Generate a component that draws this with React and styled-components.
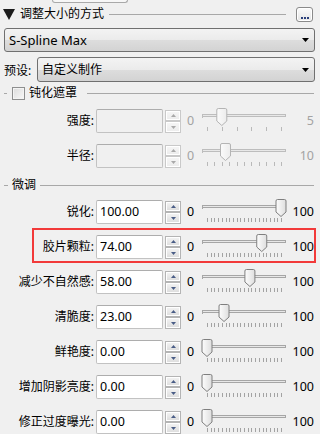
import React from "react";
import styled, { createGlobalStyle, css } from "styled-components";

const Global = createGlobalStyle`
  html, body { margin: 0; padding: 0; background: #f0f0f0; }
  body { font-family: "Noto Sans", "Noto Sans CJK SC", sans-serif; color: #000; }
  * { box-sizing: border-box; }
`;

const CJK = `"Noto Sans", "Noto Sans CJK SC", sans-serif`;

const Panel = styled.div`
  width: 320px;
  height: 434px;
  overflow: hidden;
  background: #f0f0f0;
  display: flex;
  flex-direction: column;
`;

const TopStub = styled.div`
  margin-left: 52px;
  width: 76px;
  height: 3px;
  flex: none;
  border: 1px solid #a9a9a9;
  border-top: none;
  border-radius: 0 0 3px 3px;
  background: #f7f7f7;
`;

const HeaderRow = styled.div`
  height: 22px;
  flex: none;
  display: flex;
  align-items: center;
  padding: 0 7px 0 3px;
`;

const Title = styled.span`
  font-family: ${CJK};
  font-size: 12px;
  margin-left: 5px;
  line-height: 1;
`;

const Rule = styled.div`
  flex: 1;
  height: 1px;
  background: #a8a8a8;
  margin-left: ${(p) => p.$gap || 5}px;
  margin-right: ${(p) => p.$right || 0}px;
`;

const DotsButton = styled.div`
  width: 17px;
  height: 15px;
  border: 1px solid #8a8a8a;
  border-radius: 3px;
  background: linear-gradient(#fbfbfb, #e4e4e4);
  box-shadow: inset 0 0 0 1px #ffffff;
  display: flex;
  align-items: flex-end;
  justify-content: center;
  padding-bottom: 2px;
  gap: 1px;
`;

const Dot = styled.span`
  width: 2px;
  height: 2px;
  background: #2a3f7a;
`;

const Select = styled.div`
  height: ${(p) => p.$h || 24}px;
  flex: ${(p) => (p.$grow ? 1 : "none")};
  border: 1px solid #707070;
  border-radius: 3px;
  background: linear-gradient(#f3f3f3 0%, #ebebeb 50%, #dddddd 51%, #d3d3d3 100%);
  display: flex;
  align-items: center;
  padding: 0 5px 0 4px;
  font-family: ${CJK};
  font-size: ${(p) => p.$fs || 12}px;
`;

const SelectText = styled.span`
  flex: 1;
  line-height: 1;
`;

const FirstSelect = styled(Select)`
  margin: 3px 5px 0 4px;
`;

const PresetRow = styled.div`
  margin-top: 5px;
  display: flex;
  align-items: center;
  padding: 0 5px 0 4px;
  gap: 4px;
  flex: none;
`;

const PresetLabel = styled.span`
  font-family: ${CJK};
  font-size: 12px;
  width: 29px;
`;

const GroupHeader = styled.div`
  height: ${(p) => p.$h}px;
  margin-bottom: ${(p) => p.$mb}px;
  flex: none;
  display: flex;
  align-items: center;
  padding: 0 6px 0 4px;
`;

const Dash = styled.div`
  width: ${(p) => p.$w}px;
  height: 1px;
  background: #a8a8a8;
  margin-right: ${(p) => p.$mr}px;
`;

const CheckBox = styled.div`
  width: 13px;
  height: 13px;
  border: 1px solid #8e8f8f;
  background: linear-gradient(135deg, #dcdcdc, #f8f8f8);
  box-shadow: inset 0 0 0 1px #f4f4f4;
  margin-right: 4px;
`;

const GroupTitle = styled.span`
  font-family: ${CJK};
  font-size: 12px;
  line-height: 1;
`;

const ParamRowWrap = styled.div`
  height: 35px;
  flex: none;
  display: flex;
  align-items: flex-start;
  position: relative;
  ${(p) =>
    p.$highlight &&
    css`
      &::after {
        content: "";
        position: absolute;
        left: 32px;
        right: 4px;
        top: -6px;
        bottom: 6px;
        border: 2px solid #f23a3a;
        pointer-events: none;
      }
    `}
`;

const Label = styled.div`
  width: 96px;
  padding-right: 2px;
  margin-top: 1px;
  height: 24px;
  line-height: 24px;
  text-align: right;
  font-family: ${CJK};
  font-size: 12px;
  white-space: nowrap;
`;

const ValueBox = styled.div`
  width: 67px;
  height: 24px;
  margin-top: 1px;
  border: 1px solid #c2c2c2;
  border-top-color: #adadad;
  border-radius: 2px;
  background: ${(p) => (p.$disabled ? "#f0f0f0" : "#ffffff")};
  font-family: "Noto Sans", sans-serif;
  font-size: 12.5px;
  line-height: 22px;
  padding-left: 3px;
`;

const Spin = styled.div`
  margin: 2px 0 0 2px;
  width: 16px;
  display: flex;
  flex-direction: column;
  gap: 0px;
`;

const SpinButton = styled.div`
  height: ${(p) => p.$h}px;
  border: 1px solid ${(p) => (p.$disabled ? "#c9c9c9" : "#b4b4b4")};
  box-shadow: inset 0 0 0 1px #ffffff;
  background: ${(p) =>
    p.$disabled ? "linear-gradient(#f6f6f6, #ececec)" : "linear-gradient(#f4f4f4, #dcdcdc)"};
  display: flex;
  align-items: center;
  justify-content: center;
`;

const MinLabel = styled.div`
  width: 19px;
  padding-left: 6px;
  margin-top: 1px;
  line-height: 24px;
  font-family: "Noto Sans", sans-serif;
  font-size: 12.5px;
  color: ${(p) => (p.$disabled ? "#a3a3a3" : "#000")};
`;

const MaxLabel = styled.div`
  flex: 1;
  text-align: right;
  padding-right: 6px;
  margin-top: 1px;
  line-height: 24px;
  font-family: "Noto Sans", sans-serif;
  font-size: 12.5px;
  color: ${(p) => (p.$disabled ? "#a3a3a3" : "#000")};
`;

const SliderSvg = styled.svg`
  flex: none;
  display: block;
`;

function Arrow({ up, disabled }) {
  return (
    <svg width="5" height="3" viewBox="0 0 5 3">
      <polygon
        points={up ? "0,3 5,3 2.5,0" : "0,0 5,0 2.5,3"}
        fill={disabled ? "#a9a9a9" : "#4a5d86"}
      />
    </svg>
  );
}

function Slider({ value, max, ticks, disabled }) {
  const cx = 7 + (value / max) * 74;
  const tickXs = Array.from({ length: ticks }, (_, i) => Math.round(7 + (i * 74) / (ticks - 1)) + 0.5);
  const stroke = disabled ? "#b4b4b4" : "#7f7f7f";
  const id = `g${value}${max}${disabled ? "d" : "e"}`;
  return (
    <SliderSvg width="90" height="25" viewBox="0 0 90 25">
      <defs>
        <linearGradient id={id} x1="0" x2="1" y1="0" y2="0">
          <stop offset="0" stopColor={disabled ? "#fbfbfb" : "#fdfdfd"} />
          <stop offset="1" stopColor={disabled ? "#ececec" : "#dedede"} />
        </linearGradient>
      </defs>
      <rect x="2.5" y="6.5" width="83" height="2" fill="#e8e8e8" stroke={disabled ? "#bdbdbd" : "#a6a6a6"} />
      <line x1="2.5" y1="9" x2="2.5" y2="10" stroke={disabled ? "#bdbdbd" : "#a6a6a6"} />
      {tickXs.map((x, i) => (
        <line key={i} x1={x} x2={x} y1="19" y2="23" stroke={disabled ? "#b9b9b9" : "#a3a3a3"} />
      ))}
      <path
        d={`M${cx - 5} 2 Q${cx - 5} 0.5 ${cx - 3.5} 0.5 H${cx + 3.5} Q${cx + 5} 0.5 ${cx + 5} 2 V13 L${cx} 17.5 L${cx - 5} 13 Z`}
        fill={`url(#${id})`}
        stroke={stroke}
      />
    </SliderSvg>
  );
}

function ParamRow({ label, value, slider, max, ticks, disabled, highlight }) {
  return (
    <ParamRowWrap $highlight={highlight}>
      <Label>{label}</Label>
      <ValueBox $disabled={disabled}>{value}</ValueBox>
      <Spin>
        <SpinButton $h={11} $disabled={disabled}>
          <Arrow up disabled={disabled} />
        </SpinButton>
        <SpinButton $h={12} $disabled={disabled}>
          <Arrow disabled={disabled} />
        </SpinButton>
      </Spin>
      <MinLabel $disabled={disabled}>0</MinLabel>
      <Slider value={slider} max={max} ticks={ticks} disabled={disabled} />
      <MaxLabel $disabled={disabled}>{max}</MaxLabel>
    </ParamRowWrap>
  );
}

const DropArrow = () => (
  <svg width="7" height="4" viewBox="0 0 7 4">
    <polygon points="0,0 7,0 3.5,4" fill="#000" />
  </svg>
);

const fine = [
  { label: "锐化:", value: "100.00", slider: 100 },
  { label: "胶片颗粒:", value: "74.00", slider: 74, highlight: true },
  { label: "减少不自然感:", value: "58.00", slider: 58 },
  { label: "清脆度:", value: "23.00", slider: 23 },
  { label: "鲜艳度:", value: "0.00", slider: 0 },
  { label: "增加阴影亮度:", value: "0.00", slider: 0 },
  { label: "修正过度曝光:", value: "0.00", slider: 0 },
];

export default function App() {
  return (
    <>
      <Global />
      <Panel>
        <TopStub />
        <HeaderRow>
          <svg width="12" height="11" viewBox="0 0 12 11">
            <polygon points="0,0 12,0 6,11" fill="#1c1c1c" />
          </svg>
          <Title>调整大小的方式</Title>
          <Rule $gap={5} $right={10} />
          <DotsButton>
            <Dot />
            <Dot />
            <Dot />
          </DotsButton>
        </HeaderRow>
        <FirstSelect $fs={13}>
          <SelectText>S-Spline Max</SelectText>
          <DropArrow />
        </FirstSelect>
        <PresetRow>
          <PresetLabel>预设:</PresetLabel>
          <Select $grow $h={25}>
            <SelectText>自定义制作</SelectText>
            <DropArrow />
          </Select>
        </PresetRow>
        <GroupHeader $h={22} $mb={4}>
          <Dash $w={3} $mr={5} />
          <CheckBox />
          <GroupTitle>钝化遮罩</GroupTitle>
          <Rule $gap={10} />
        </GroupHeader>
        <ParamRow label="强度:" value="" slider={1} max={5} ticks={6} disabled />
        <ParamRow label="半径:" value="" slider={2.5} max={10} ticks={11} disabled />
        <GroupHeader $h={14} $mb={7}>
          <Dash $w={4} $mr={4} />
          <GroupTitle>微调</GroupTitle>
          <Rule $gap={4} />
        </GroupHeader>
        {fine.map((r) => (
          <ParamRow key={r.label} {...r} max={100} ticks={21} />
        ))}
      </Panel>
    </>
  );
}
